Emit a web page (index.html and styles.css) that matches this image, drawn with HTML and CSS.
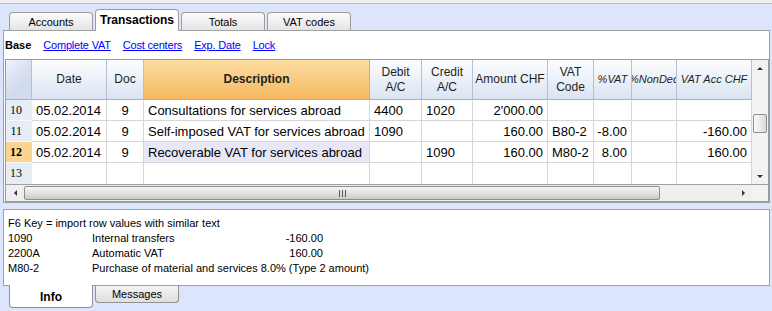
FILE: index.html
```html
<!DOCTYPE html>
<html lang="en">

<head>
    <meta charset="UTF-8">
    <title>Transactions</title>
    <link rel="stylesheet" href="styles.css">
</head>

<body>
    <div class="topbar"></div>
    <ul class="tabs">
        <li>Accounts</li>
        <li class="active">Transactions</li>
        <li>Totals</li>
        <li>VAT codes</li>
    </ul>
    <div class="panel">
        <div class="views">
            <b>Base</b>
            <a href="javascript:;">Complete VAT</a>
            <a href="javascript:;">Cost centers</a>
            <a href="javascript:;">Exp. Date</a>
            <a href="javascript:;">Lock</a>
        </div>
        <div class="grid">
            <div class="grid_main">
                <div class="cells">
                    <!-- header -->
                    <div class="hd corner"></div>
                    <div class="hd">Date</div>
                    <div class="hd">Doc</div>
                    <div class="hd sel">Description</div>
                    <div class="hd"><span>Debit<br>A/C</span></div>
                    <div class="hd"><span>Credit<br>A/C</span></div>
                    <div class="hd">Amount CHF</div>
                    <div class="hd"><span>VAT<br>Code</span></div>
                    <div class="hd it">%VAT</div>
                    <div class="hd it">%NonDed</div>
                    <div class="hd it">VAT Acc CHF</div>
                    <!-- row 10 -->
                    <div class="rn">10</div>
                    <div class="c">05.02.2014</div>
                    <div class="c m">9</div>
                    <div class="c">Consultations for services abroad</div>
                    <div class="c">4400</div>
                    <div class="c">1020</div>
                    <div class="c r">2'000.00</div>
                    <div class="c"></div>
                    <div class="c r"></div>
                    <div class="c"></div>
                    <div class="c r"></div>
                    <!-- row 11 -->
                    <div class="rn">11</div>
                    <div class="c">05.02.2014</div>
                    <div class="c m">9</div>
                    <div class="c">Self-imposed VAT for services abroad</div>
                    <div class="c">1090</div>
                    <div class="c"></div>
                    <div class="c r">160.00</div>
                    <div class="c">B80-2</div>
                    <div class="c r">-8.00</div>
                    <div class="c"></div>
                    <div class="c r">-160.00</div>
                    <!-- row 12 -->
                    <div class="rn cur">12</div>
                    <div class="c">05.02.2014</div>
                    <div class="c m">9</div>
                    <div class="c focus">Recoverable VAT for services abroad</div>
                    <div class="c"></div>
                    <div class="c">1090</div>
                    <div class="c r">160.00</div>
                    <div class="c">M80-2</div>
                    <div class="c r">8.00</div>
                    <div class="c"></div>
                    <div class="c r">160.00</div>
                    <!-- row 13 -->
                    <div class="rn last">13</div>
                    <div class="c last"></div>
                    <div class="c last"></div>
                    <div class="c last"></div>
                    <div class="c last"></div>
                    <div class="c last"></div>
                    <div class="c last"></div>
                    <div class="c last"></div>
                    <div class="c last"></div>
                    <div class="c last"></div>
                    <div class="c last"></div>
                </div>
                <div class="vscroll">
                    <div class="btn"><i class="arr_up"></i></div>
                    <div class="track"><div class="vthumb"></div></div>
                    <div class="btn"><i class="arr_down"></i></div>
                </div>
            </div>
            <div class="hscroll">
                <div class="btn"><i class="arr_left"></i></div>
                <div class="hthumb"><div class="grip"></div></div>
                <div class="track"></div>
                <div class="btn right"><i class="arr_right"></i></div>
                <div class="box"></div>
            </div>
        </div>
    </div>
    <div class="info">
        <div class="full">F6 Key = import row values with similar text</div>
        <div>1090</div>
        <div>Internal transfers</div>
        <div class="amt">-160.00</div>
        <div>2200A</div>
        <div>Automatic VAT</div>
        <div class="amt">160.00</div>
        <div>M80-2</div>
        <div class="wide">Purchase of material and services 8.0% (Type 2 amount)</div>
    </div>
    <ul class="bottom_tabs">
        <li class="active">Info</li>
        <li>Messages</li>
    </ul>
</body>

</html>
```

FILE: styles.css
```css
html,body,ul,li,div,a,b,i,span {
    padding: 0;
    margin: 0;
    box-sizing: border-box;
}
ul {
    list-style: none;
}
body {
    width: 772px;
    height: 311px;
    overflow: hidden;
    background-color: #dde5fc;
    font-family: "Liberation Sans", Arial, sans-serif;
    font-size: 11px;
    color: #000;
}
.topbar {
    height: 4px;
    background-color: #eeeeee;
    border-bottom: 1px solid #b7bdcc;
}
/* top tabs */
.tabs {
    display: flex;
    align-items: flex-end;
    gap: 2px;
    height: 26px;
    padding-left: 9px;
}
.tabs > li {
    width: 84px;
    height: 18px;
    padding-top: 1px;
    line-height: 17px;
    text-align: center;
    border: 1px solid #9c9c9c;
    border-bottom: none;
    border-radius: 4px 4px 0 0;
    background: linear-gradient(#fbfbfb, #e5e5e5);
}
.tabs > li.active {
    height: 22px;
    margin-bottom: -1px;
    padding-top: 2px;
    line-height: 16px;
    font-size: 12px;
    font-weight: bold;
    background: #fff;
    position: relative;
    z-index: 1;
}
.panel {
    width: 767px;
    height: 173px;
    margin-left: 3px;
    background-color: #fff;
    border: 1px solid #a0a0a0;
}
.views {
    display: flex;
    gap: 12px;
    height: 28px;
    padding: 8px 0 0 1px;
    line-height: 13px;
}
.views a {
    color: #0000ff;
    text-decoration: underline;
    letter-spacing: -0.2px;
}
/* grid */
.grid {
    width: 764px;
    height: 143px;
    margin-left: 1px;
    border: 1px solid #9a9a9a;
}
.grid_main {
    display: flex;
    height: 124px;
}
.cells {
    display: grid;
    grid-template-columns: 26px 75px 37px 226px 52px 51px 75px 46px 38px 45px 75px;
    grid-template-rows: 40px repeat(4, 21px);
    width: 746px;
}
.hd {
    display: flex;
    align-items: center;
    justify-content: center;
    overflow: hidden;
    white-space: nowrap;
    text-align: center;
    font-size: 12px;
    line-height: 15px;
    color: #1e1e1e;
    background: linear-gradient(#fcfdfe, #dbe4f2);
    border-right: 1px solid #aec2da;
    border-bottom: 1px solid #9fb3cb;
}
.hd.corner {
    background: linear-gradient(135deg, #eef2fa, #d2dcf0 60%);
}
.hd.sel {
    font-weight: bold;
    background: linear-gradient(#fbdea2, #f6b861);
    border-right-color: #eea64a;
    border-bottom-color: #e8a240;
}
.hd.it {
    font-style: italic;
    font-size: 11px;
}
.rn {
    display: flex;
    align-items: center;
    justify-content: flex-end;
    padding-right: 10px;
    font-family: "Liberation Serif", "Times New Roman", serif;
    font-size: 12px;
    background-color: #e6edf7;
    border-bottom: 1px solid #f6f8fb;
}
.rn.cur {
    font-weight: bold;
    background-color: #fbd58f;
}
.c {
    display: flex;
    align-items: center;
    padding: 0 4px;
    overflow: hidden;
    white-space: nowrap;
    font-size: 13px;
    border-right: 1px solid #d6d6d6;
    border-bottom: 1px solid #d6d6d6;
}
.c.r {
    justify-content: flex-end;
}
.c.m {
    justify-content: center;
}
.c.focus {
    background-color: #e7e7f7;
}
.c.last,
.rn.last {
    border-bottom: none;
}
/* scrollbars */
.btn {
    display: flex;
    align-items: center;
    justify-content: center;
}
.vscroll {
    display: flex;
    flex-direction: column;
    width: 16px;
    background-color: #f2f2f2;
}
.vscroll .btn {
    height: 16px;
}
.vscroll .track {
    flex: 1;
}
.vthumb {
    height: 19px;
    margin: 38px 1px 0 1px;
    border: 1px solid #8f8f8f;
    border-radius: 2px;
    background: linear-gradient(90deg, #fafafa, #dadada);
}
.hscroll {
    display: flex;
    height: 17px;
    border-top: 1px solid #a0a0a0;
    background-color: #efefef;
}
.hscroll .btn {
    width: 18px;
}
.hscroll .btn.right {
    width: 17px;
}
.hscroll .track {
    flex: 1;
}
.hscroll .box {
    width: 16px;
    background-color: #f3f3f3;
}
.hthumb {
    display: flex;
    align-items: center;
    justify-content: center;
    width: 636px;
    margin: 1px 0;
    border: 1px solid #8c8c8c;
    border-radius: 2px;
    background: linear-gradient(#f7f7f7, #e2e2e2 50%, #c9c9c9);
}
.grip {
    width: 7px;
    height: 7px;
    background: linear-gradient(90deg, #555 1px, transparent 1px) 0 0 / 3px 100% repeat-x;
}
.arr_up,
.arr_down {
    width: 0;
    height: 0;
    border-left: 3px solid transparent;
    border-right: 3px solid transparent;
}
.arr_up {
    border-bottom: 3px solid #333;
}
.arr_down {
    border-top: 3px solid #333;
}
.arr_left,
.arr_right {
    width: 0;
    height: 0;
    border-top: 3px solid transparent;
    border-bottom: 3px solid transparent;
}
.arr_left {
    border-right: 3px solid #333;
}
.arr_right {
    border-left: 3px solid #333;
}
/* info panel */
.info {
    display: grid;
    grid-template-columns: 84px 170px 61px;
    grid-auto-rows: 15px;
    align-content: start;
    width: 767px;
    height: 77px;
    margin: 6px 0 0 3px;
    padding: 6px 0 0 4px;
    line-height: 15px;
    background-color: #fff;
    border: 1px solid #a0a0a0;
}
.info .full {
    grid-column: 1 / 4;
}
.info .wide {
    grid-column: 2 / 4;
    white-space: nowrap;
}
.info .amt {
    text-align: right;
}
.bottom_tabs {
    display: flex;
    align-items: flex-start;
    gap: 2px;
    padding-left: 9px;
}
.bottom_tabs > li {
    width: 84px;
    height: 17px;
    padding-top: 2px;
    line-height: 13px;
    text-align: center;
    border: 1px solid #919191;
    border-top: none;
    border-radius: 0 0 4px 4px;
    background: linear-gradient(#f4f4f4, #dedede);
}
.bottom_tabs > li.active {
    height: 23px;
    margin-top: -1px;
    padding-top: 4px;
    line-height: 16px;
    font-size: 12px;
    font-weight: bold;
    background: #fff;
    position: relative;
}
```
